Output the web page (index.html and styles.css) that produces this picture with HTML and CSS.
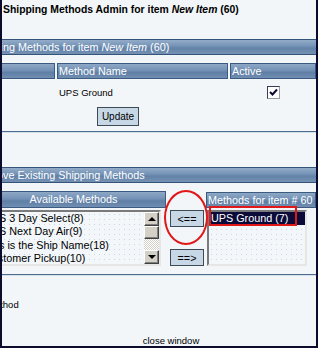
FILE: index.html
```html
<!DOCTYPE html>
<html>
<head>
<meta charset="utf-8">
<link rel="stylesheet" href="styles.css">
</head>
<body>
<div class="frame">
  <div class="title">Shipping Methods Admin for item <i>New Item</i> (60)</div>

  <div class="bar bar1"><span class="bar-text">Shipping Methods for item <i>New Item</i> (60)</span></div>

  <div class="grid3 hrow">
    <div class="hcell"></div>
    <div class="hcell">Method Name</div>
    <div class="hcell">Active</div>
  </div>
  <div class="grid3 drow">
    <div></div>
    <div class="name">UPS Ground</div>
    <div class="chk-cell">
      <span class="checkbox">
        <svg width="9" height="9" viewBox="0 0 9 9"><path d="M1 4 L3.5 6.5 L8 1.5" fill="none" stroke="#0a0a30" stroke-width="2"/></svg>
      </span>
    </div>
  </div>
  <div class="actions"><button class="btn upd">Update</button></div>

  <div class="rule"></div>

  <div class="bar bar2"><span class="bar-text">Add/Remove Existing Shipping Methods</span></div>

  <div class="assign">
    <div class="hcell center avail">Available Methods</div>
    <div></div>
    <div class="hcell mine">Methods for item # 60</div>

    <div class="list left">
      <div class="items">
        <div class="item">UPS 3 Day Select(8)</div>
        <div class="item">UPS Next Day Air(9)</div>
        <div class="item">This is the Ship Name(18)</div>
        <div class="item">Customer Pickup(10)</div>
      </div>
      <div class="sbar">
        <div class="sbtn"><span class="arrow up"></span></div>
        <div class="sthumb"></div>
        <div class="strack"></div>
        <div class="sbtn"><span class="arrow down"></span></div>
      </div>
    </div>

    <div class="movers">
      <button class="btn mv">&lt;==</button>
      <button class="btn mv">==&gt;</button>
    </div>

    <div class="list right">
      <div class="item sel">UPS Ground (7)</div>
    </div>
  </div>

  <div class="rule rule2"></div>

  <div class="foot-left"><span class="foot-text">Method</span></div>
  <div class="close">close window</div>

  <div class="mark-circle"></div>
  <div class="mark-box"></div>
</div>
</body>
</html>
```

FILE: styles.css
```css
body {
  margin: 0;
  background: #ffffff;
}

.frame {
  position: relative;
  width: 318px;
  height: 348px;
  box-sizing: border-box;
  border-left: 2px solid #0b0b2e;
  border-right: 2px solid #0b0b2e;
  border-bottom: 2px solid #0b0b2e;
  background: #f2f6f9;
  overflow: hidden;
  font-family: "Liberation Sans", Arial, sans-serif;
  color: #000;
}

.title {
  padding: 3px 0 0 1px;
  font-size: 10.4px;
  font-weight: bold;
  line-height: 13px;
  white-space: nowrap;
}

.bar {
  height: 16px;
  box-sizing: border-box;
  border-top: 1px solid #34547a;
  border-bottom: 1px solid #34547a;
  background: linear-gradient(#93acc8, #7795b8 40%, #6282a8 58%, #7591b4);
  color: #fff;
  font-size: 10.8px;
  line-height: 14px;
  white-space: nowrap;
  overflow: hidden;
}

.bar1 {
  margin-top: 23px;
}

.bar1 .bar-text {
  display: inline-block;
  margin-left: -29px;
}

.bar2 {
  margin-top: 34px;
}

.bar2 .bar-text {
  display: inline-block;
  margin-left: -50px;
}

.grid3 {
  display: grid;
  grid-template-columns: 57px 171px 1fr;
  column-gap: 2px;
  margin-left: -4px;
}

.hrow {
  margin-top: 8px;
  height: 16px;
}

.hcell {
  box-sizing: border-box;
  border: 1px solid #3b5b81;
  background: linear-gradient(#8ea8c6, #7391b5 45%, #5f7fa5 60%, #718eb2);
  color: #fff;
  font-size: 10.8px;
  line-height: 14px;
  padding-left: 1px;
  white-space: nowrap;
  overflow: hidden;
}

.center {
  text-align: center;
}

.drow {
  height: 24px;
  margin-top: 1px;
  align-items: center;
}

.name {
  padding-left: 2px;
  font-size: 9.5px;
}

.chk-cell {
  display: flex;
  justify-content: center;
}

.checkbox {
  width: 13px;
  height: 13px;
  box-sizing: border-box;
  border: 1px solid #9a9aa4;
  border-top-color: #3a3a50;
  border-left-color: #3a3a50;
  background: #fff;
  display: flex;
  align-items: center;
  justify-content: center;
}

.actions {
  margin-top: 2px;
  padding-left: 95px;
}

.btn {
  box-sizing: border-box;
  border: 1px solid #3e4a56;
  background: #c7d7e5;
  color: #000;
  font-family: "Liberation Sans", Arial, sans-serif;
  padding: 0;
  margin: 0;
}

.upd {
  width: 42px;
  height: 19px;
  font-size: 10px;
}

.rule {
  margin-top: 5px;
  height: 1px;
  background: #4d6d8f;
  border-bottom: 1px solid #d4e0ea;
}

.assign {
  margin-top: 8px;
  margin-left: -22px;
  display: grid;
  grid-template-columns: 186px 40px 1fr;
  grid-template-rows: 17px 56px;
  row-gap: 2px;
}

.avail {
  font-size: 10.8px;
}

.mine {
  padding-left: 1px;
  margin-top: 1px;
  height: 16px;
}

.list {
  box-sizing: border-box;
  height: 56px;
  border: 2px solid;
  border-color: #7a7a7a #e6e6e6 #e6e6e6 #7a7a7a;
  background-color: #f3f7fa;
  background-image: radial-gradient(#c9d7e4 0.6px, transparent 0.8px);
  background-size: 5px 5px;
  font-size: 10.8px;
}

.list.left {
  width: 181px;
  display: flex;
}

.items {
  flex: 1;
  padding-left: 2px;
  white-space: nowrap;
  overflow: hidden;
}

.item {
  height: 13.3px;
  line-height: 13.3px;
}

.sbar {
  width: 15px;
  display: flex;
  flex-direction: column;
}

.sbtn,
.sthumb {
  box-sizing: border-box;
  background: #d4d0c8;
  border: 1px solid;
  border-color: #ffffff #404040 #404040 #ffffff;
  box-shadow: inset -1px -1px #808080;
  display: flex;
  align-items: center;
  justify-content: center;
}

.sbtn {
  height: 14px;
}

.sthumb {
  height: 13px;
}

.strack {
  height: 11px;
  background: repeating-conic-gradient(#d4d0c8 0 25%, #ffffff 0 50%) 0 0 / 2px 2px;
}

.arrow {
  width: 0;
  height: 0;
  border-left: 4px solid transparent;
  border-right: 4px solid transparent;
}

.arrow.up {
  border-bottom: 4px solid #000;
}

.arrow.down {
  border-top: 4px solid #000;
}

.movers {
  display: flex;
  flex-direction: column;
  justify-content: space-between;
  align-items: flex-start;
  padding-left: 4px;
}

.mv {
  width: 34px;
  height: 17px;
  font-size: 10.8px;
  line-height: 14px;
}

.list.right {
  width: 100px;
  margin-left: 1px;
  padding-top: 0;
}

.sel {
  background: #0b0b3a;
  color: #fff;
  padding-left: 2px;
  height: 13px;
  line-height: 13px;
  white-space: nowrap;
}

.rule2 {
  margin-top: 8px;
}

.foot-left {
  margin-top: 22px;
  height: 13px;
  line-height: 13px;
  font-size: 9.5px;
  white-space: nowrap;
  overflow: hidden;
}

.foot-text {
  display: inline-block;
  margin-left: -15px;
}

.close {
  margin-top: 23px;
  padding-left: 24px;
  text-align: center;
  font-size: 9.5px;
  line-height: 13px;
}

.mark-circle {
  position: absolute;
  left: 162px;
  top: 190px;
  width: 44px;
  height: 55px;
  box-sizing: border-box;
  border: 2px solid #e01818;
  border-radius: 50%;
}

.mark-box {
  position: absolute;
  left: 207px;
  top: 206px;
  width: 88px;
  height: 20px;
  box-sizing: border-box;
  border: 2px solid #e01818;
}
```
